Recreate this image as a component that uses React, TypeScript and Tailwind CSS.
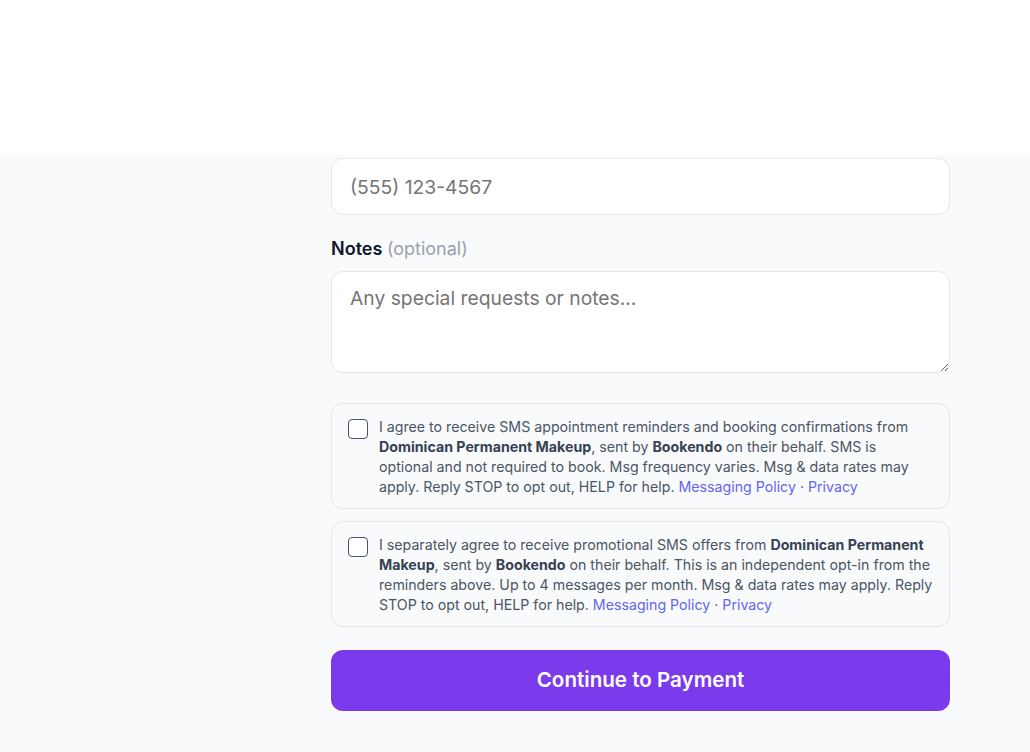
export default function App() {
  return (
    <div className="min-h-[752px] bg-[#f9fafb] font-['Inter',sans-serif]">
      <div className="h-[155px] bg-white"></div>
      <div className="ml-[331px] w-[619px] pt-[3px] pb-10">
        <input
          type="text"
          placeholder="(555) 123-4567"
          className="block h-[57px] w-full rounded-xl border border-gray-200 bg-white px-[18px] text-[19.3px] text-gray-800 placeholder:text-[#757575] outline-none"
        />

        <label className="mt-5 block text-[18px] leading-7 font-semibold text-gray-900">
          Notes <span className="font-normal text-gray-400">(optional)</span>
        </label>
        <textarea
          placeholder="Any special requests or notes..."
          className="mt-2 block h-[102px] w-full rounded-xl border border-gray-200 bg-white px-[18px] py-[14px] text-[19.3px] leading-6 text-gray-800 placeholder:text-[#757575] outline-none"
        />

        <div className="mt-[30px] flex flex-col gap-3">
          <ConsentCard>
            I agree to receive SMS appointment reminders and booking confirmations from{' '}
            <b className="font-bold text-gray-700">Dominican Permanent Makeup</b>, sent by{' '}
            <b className="font-bold text-gray-700">Bookendo</b> on their behalf. SMS is optional and not required to
            book. Msg frequency varies. Msg &amp; data rates may apply. Reply STOP to opt out, HELP for help.{' '}
            <Links />
          </ConsentCard>
          <ConsentCard>
            I separately agree to receive promotional SMS offers from{' '}
            <b className="font-bold text-gray-700">Dominican Permanent Makeup</b>, sent by{' '}
            <b className="font-bold text-gray-700">Bookendo</b> on their behalf. This is an independent opt-in from
            the reminders above. Up to 4 messages per month. Msg &amp; data rates may apply. Reply STOP to opt out, HELP
            for help. <Links />
          </ConsentCard>
        </div>

        <button className="mt-[23px] h-[61px] w-full rounded-xl bg-[#7c3aed] text-[20.6px] font-semibold text-white">
          Continue to Payment
        </button>
      </div>
    </div>
  )
}

function Links() {
  return (
    <>
      <a className="text-[#6366f1]">Messaging Policy</a> · <a className="text-[#6366f1]">Privacy</a>
    </>
  )
}

function ConsentCard({ children }: { children: React.ReactNode }) {
  return (
    <label className="flex gap-[11px] rounded-xl border border-gray-200 bg-[#f9fafb] px-4 pt-[13px] pb-[11px]">
      <span className="mt-[2px] h-5 w-5 shrink-0 rounded-[4px] border-[1.5px] border-gray-600 bg-white"></span>
      <span className="text-[14.2px] leading-5 text-gray-600">{children}</span>
    </label>
  )
}
